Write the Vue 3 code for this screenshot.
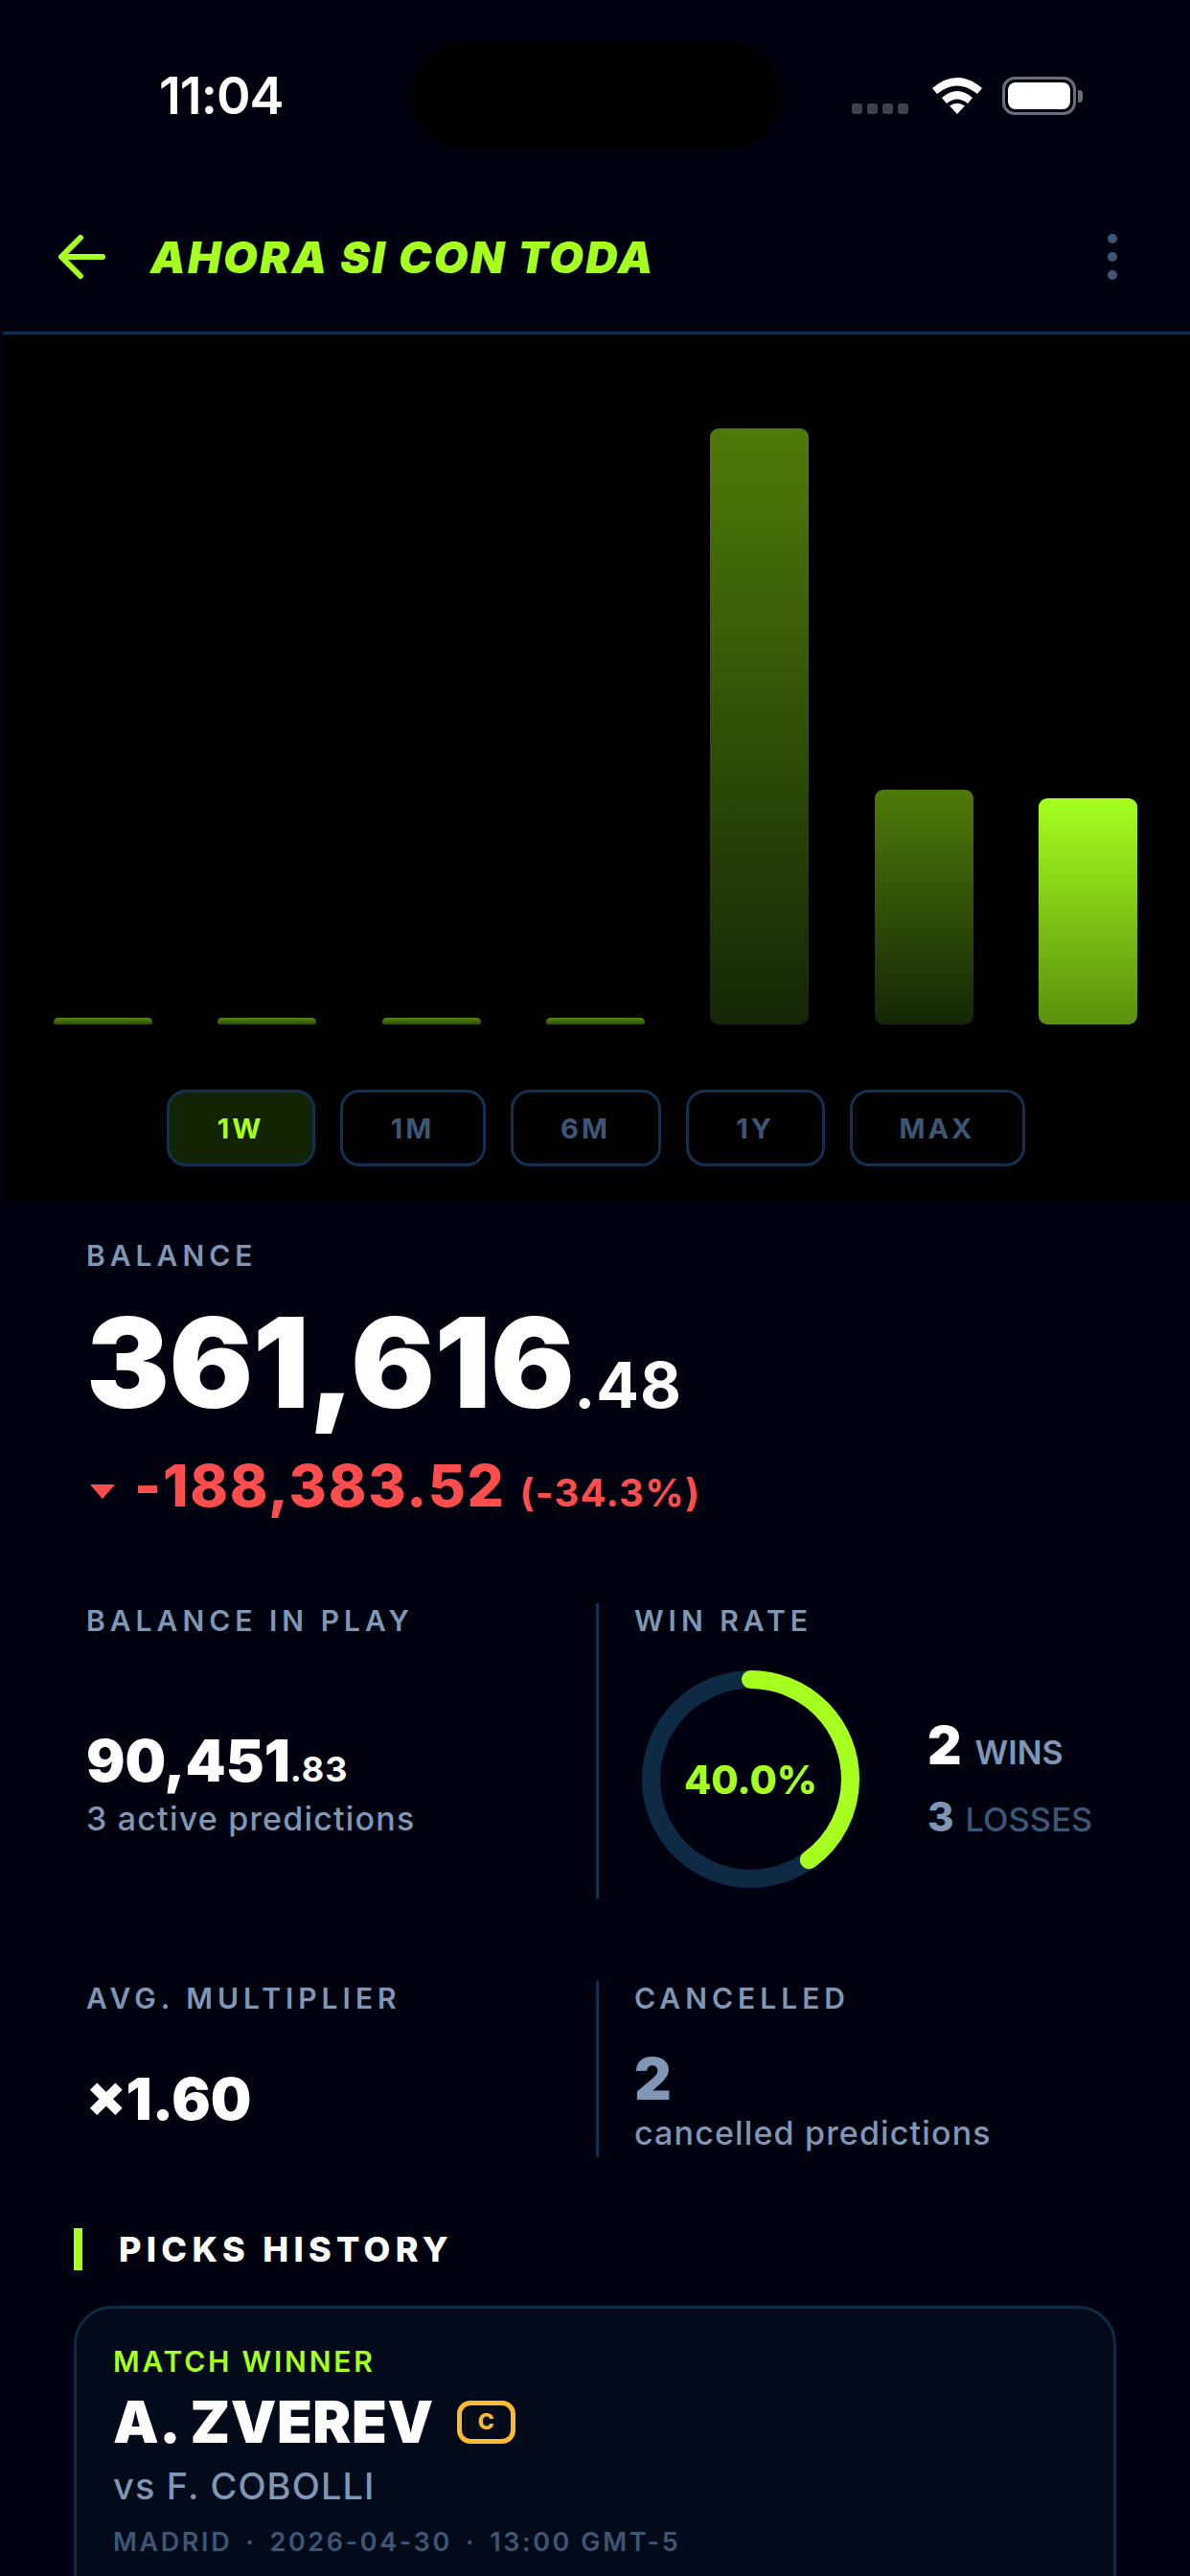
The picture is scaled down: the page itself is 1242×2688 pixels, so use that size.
<template>
  <div class="page">
    <div class="status-bar">
      <span class="time">11:04</span>
      <div class="island"></div>
      <div class="status-icons">
        <div class="cell">
          <i v-for="n in 4" :key="n"></i>
        </div>
        <svg class="wifi" width="52" height="38" viewBox="0 0 52 38" fill="#fff">
          <path d="M0 11Q26-11 52 11L47 17Q26 0 5 17Z" />
          <path d="M10 21Q26 7 42 21L37 27Q26 18 15 27Z" />
          <path d="M18 29.5Q26 24 34 29.5L26 38Z" />
        </svg>
        <div class="battery"><div class="battery-fill"></div></div>
        <div class="battery-nub"></div>
      </div>
    </div>

    <div class="top-bar">
      <svg class="back" width="50" height="46" viewBox="0 0 50 46" fill="none" stroke="#a6ff1f" stroke-width="6" stroke-linecap="round" stroke-linejoin="round">
        <path d="M46 23H4" />
        <path d="M23 3L3 23L23 43" />
      </svg>
      <div class="title">AHORA SI CON TODA</div>
      <div class="more"><i></i><i></i><i></i></div>
    </div>

    <div class="chart">
      <div class="bars">
        <div class="bar-slot" v-for="(bar, i) in bars" :key="i">
          <div class="bar" :class="bar.kind" :style="{ height: bar.height + 'px' }"></div>
        </div>
      </div>
      <div class="ranges">
        <div
          v-for="r in ranges"
          :key="r.label"
          class="range"
          :class="{ active: r.label === '1W' }"
          :style="{ width: r.width + 'px' }"
        >{{ r.label }}</div>
      </div>
    </div>

    <div class="balance">
      <div class="label">BALANCE</div>
      <div class="balance-value">361,616<span class="cents">.48</span></div>
      <div class="delta">
        <span class="tri"></span>
        <span class="delta-num">-188,383.52</span>
        <span class="delta-pct">(-34.3%)</span>
      </div>
    </div>

    <div class="stats first">
      <div class="stat left">
        <div class="label">BALANCE IN PLAY</div>
        <div class="play">
          <div class="num">90,451<span class="num-cents">.83</span></div>
          <div class="sub">3 active predictions</div>
        </div>
      </div>
      <div class="stat right">
        <div class="label">WIN RATE</div>
        <div class="win-row">
          <div class="ring">
            <svg width="227" height="227" viewBox="0 0 227 227" fill="none">
              <circle cx="113.5" cy="113.5" r="104" stroke="#0e2a45" stroke-width="19" />
              <circle
                cx="113.5"
                cy="113.5"
                r="104"
                stroke="#a6ff1f"
                stroke-width="19"
                stroke-linecap="round"
                :stroke-dasharray="dash"
                transform="rotate(-90 113.5 113.5)"
              />
            </svg>
            <span class="ring-text">40.0%</span>
          </div>
          <div class="tally">
            <div class="tally-win"><b>2</b><span>WINS</span></div>
            <div class="tally-loss"><b>3</b><span>LOSSES</span></div>
          </div>
        </div>
      </div>
    </div>

    <div class="stats second">
      <div class="stat left">
        <div class="label">AVG. MULTIPLIER</div>
        <div class="num multi">×1.60</div>
      </div>
      <div class="stat right">
        <div class="label">CANCELLED</div>
        <div class="num muted">2</div>
        <div class="sub">cancelled predictions</div>
      </div>
    </div>

    <div class="section-head">
      <span class="section-bar"></span>
      <span class="section-title">PICKS HISTORY</span>
    </div>

    <div class="card">
      <div class="market">MATCH WINNER</div>
      <div class="player">
        <span>A. ZVEREV</span>
        <span class="badge">C</span>
      </div>
      <div class="versus">vs F. COBOLLI</div>
      <div class="meta">MADRID<em>·</em>2026-04-30<em>·</em>13:00 GMT-5</div>
    </div>
  </div>
</template>

<script setup>
const bars = [
  { height: 7, kind: 'flat' },
  { height: 7, kind: 'flat' },
  { height: 7, kind: 'flat' },
  { height: 7, kind: 'flat' },
  { height: 622, kind: 'dim' },
  { height: 245, kind: 'dim' },
  { height: 236, kind: 'now' }
]

const ranges = [
  { label: '1W', width: 155 },
  { label: '1M', width: 152 },
  { label: '6M', width: 157 },
  { label: '1Y', width: 145 },
  { label: 'MAX', width: 183 }
]

// 40% of the ring
const circ = 2 * Math.PI * 104
const dash = `${circ * 0.4} ${circ}`
</script>

<style>
html,
body {
  margin: 0;
  background: #00030f;
}
</style>

<style scoped>
.page {
  width: 1242px;
  height: 2688px;
  overflow: hidden;
  background: #00030f;
  color: #fff;
  font-family: Inter, "Liberation Sans", sans-serif;
  box-sizing: border-box;
}

.status-bar {
  position: relative;
  height: 195px;
  box-sizing: border-box;
}

.time {
  position: absolute;
  left: 166px;
  top: 70px;
  font-size: 54px;
  line-height: 60px;
  font-weight: 600;
  letter-spacing: -1px;
}

.island {
  position: absolute;
  left: 428px;
  top: 43px;
  width: 387px;
  height: 113px;
  border-radius: 57px;
  background: #000;
}

.status-icons {
  position: absolute;
  left: 889px;
  top: 80px;
  display: flex;
  align-items: flex-end;
}

.cell {
  display: flex;
  gap: 5px;
  margin-bottom: 1px;
}

.cell i {
  width: 11px;
  height: 11px;
  border-radius: 3px;
  background: #3c4350;
}

.wifi {
  margin-left: 25px;
  margin-bottom: 1px;
}

.battery {
  width: 77px;
  height: 40px;
  margin-left: 21px;
  padding: 3px;
  border: 3px solid #6b6e76;
  border-radius: 13px;
  box-sizing: border-box;
}

.battery-fill {
  height: 100%;
  border-radius: 8px;
  background: #fff;
}

.battery-nub {
  width: 5px;
  height: 13px;
  margin-left: 2px;
  margin-bottom: 13px;
  border-radius: 0 4px 4px 0;
  background: #6b6e76;
}

.top-bar {
  display: flex;
  align-items: center;
  height: 151px;
  margin-left: 3px;
  padding: 0 76px 0 58px;
  border-bottom: 3px solid #10304f;
  box-sizing: content-box;
}

.back {
  flex: none;
  position: relative;
  top: -3px;
}

.title {
  position: relative;
  top: -3px;
  margin-left: 46px;
  font-size: 46px;
  font-weight: 900;
  font-style: italic;
  letter-spacing: 2.5px;
  color: #a6ff1f;
}

.more {
  position: relative;
  top: -3px;
  margin-left: auto;
  display: flex;
  flex-direction: column;
  gap: 9px;
}

.more i {
  width: 10px;
  height: 10px;
  border-radius: 50%;
  background: #3d5675;
}

.chart {
  height: 905px;
  margin-left: 3px;
  padding: 0 53px;
  background: #000;
  box-sizing: border-box;
}

.bars {
  display: grid;
  grid-template-columns: repeat(7, 103px);
  column-gap: 68.33px;
  align-items: end;
  height: 720px;
}

.bar {
  border-radius: 9px;
}

.bar.flat {
  background: linear-gradient(#568510, #2f4c08);
  border-radius: 5px 5px 3px 3px;
}

.bar.dim {
  background: linear-gradient(#4f7a0a, #142606);
}

.bar.now {
  background: linear-gradient(#a6ff1f, #5a8f0c);
}

.ranges {
  display: flex;
  justify-content: center;
  gap: 26px;
  margin-top: 68px;
  margin-left: -2px;
}

.range {
  display: flex;
  align-items: center;
  justify-content: center;
  height: 80px;
  border: 3px solid #12304f;
  border-radius: 20px;
  box-sizing: border-box;
  font-size: 29px;
  font-weight: 700;
  letter-spacing: 3px;
  color: #3d5675;
}

.range.active {
  background: #132404;
  color: #a6ff1f;
}

.label {
  font-size: 30px;
  line-height: 36px;
  font-weight: 600;
  letter-spacing: 5px;
  color: #7f97b5;
}

.balance {
  padding: 38px 90px 0;
}

.balance-value {
  margin-top: 19px;
  font-size: 130px;
  line-height: 150px;
  font-weight: 900;
  letter-spacing: -0.4px;
}

.cents {
  font-size: 66px;
  font-weight: 700;
  letter-spacing: 1px;
}

.delta {
  display: flex;
  align-items: baseline;
  margin-top: -6px;
  color: #ff4d4d;
}

.tri {
  width: 0;
  height: 0;
  margin: 0 20px 0 4px;
  border-left: 13px solid transparent;
  border-right: 13px solid transparent;
  border-top: 15px solid #ff4d4d;
  position: relative;
  top: -8px;
}

.delta-num {
  font-size: 60px;
  line-height: 72px;
  font-weight: 800;
  letter-spacing: 1.7px;
}

.delta-pct {
  margin-left: 15px;
  font-size: 40px;
  font-weight: 700;
  letter-spacing: 1.2px;
}

.stats {
  display: grid;
  grid-template-columns: 532px 1fr;
  padding-left: 90px;
}

.stat.right {
  padding-left: 37px;
  border-left: 3px solid #10304f;
}

.first {
  height: 308px;
  margin-top: 87px;
}

.second {
  height: 184px;
  margin-top: 86px;
}

.play {
  margin-top: 92px;
}

.play .sub {
  margin-top: -5px;
  letter-spacing: 1.2px;
}

.num {
  font-size: 60px;
  line-height: 72px;
  font-weight: 900;
}

.num-cents {
  font-size: 36px;
  font-weight: 700;
  letter-spacing: 1px;
}

.sub {
  font-size: 34px;
  line-height: 42px;
  font-weight: 500;
  letter-spacing: 1.15px;
  color: #7f97b5;
}

.win-row {
  display: flex;
  align-items: center;
  margin-top: 34px;
  margin-left: 8px;
}

.ring {
  position: relative;
  width: 227px;
  height: 227px;
}

.ring svg {
  display: block;
}

.ring-text {
  position: absolute;
  inset: 0;
  display: flex;
  align-items: center;
  justify-content: center;
  font-size: 41px;
  font-weight: 800;
  color: #a6ff1f;
}

.tally {
  margin-left: 71px;
}

.tally-win,
.tally-loss {
  display: flex;
  align-items: baseline;
}

.tally-win b {
  font-size: 55px;
  line-height: 66px;
  font-weight: 900;
}

.tally-win span {
  margin-left: 14px;
  font-size: 34px;
  font-weight: 600;
  color: #7f97b5;
}

.tally-loss {
  margin-top: 12px;
}

.tally-loss b {
  font-size: 42px;
  line-height: 60px;
  font-weight: 800;
  color: #7f97b5;
}

.tally-loss span {
  margin-left: 12px;
  font-size: 34.5px;
  font-weight: 500;
  color: #3d5675;
}

.multi {
  margin-top: 51px;
}

.muted {
  margin-top: 30px;
  color: #7f97b5;
}

.section-head {
  display: flex;
  align-items: center;
  margin: 74px 0 0 77px;
}

.section-bar {
  width: 9px;
  height: 44px;
  background: #a6ff1f;
}

.section-title {
  margin-left: 38px;
  font-size: 36px;
  font-weight: 800;
  letter-spacing: 5.3px;
}

.card {
  width: 1088px;
  height: 400px;
  margin: 37px 0 0 77px;
  padding: 37px 38px;
  border: 3px solid #0f2a45;
  border-radius: 40px;
  background: #030b1a;
  box-sizing: border-box;
}

.market {
  font-size: 30px;
  line-height: 36px;
  font-weight: 600;
  letter-spacing: 2.8px;
  color: #a6ff1f;
}

.player {
  display: flex;
  align-items: center;
  margin-top: 9px;
  font-size: 60px;
  line-height: 72px;
  font-weight: 900;
  letter-spacing: 0.6px;
}

.badge {
  display: flex;
  align-items: center;
  justify-content: center;
  width: 61px;
  height: 45px;
  margin-left: 24px;
  border: 5px solid #fcbb2f;
  border-radius: 14px;
  box-sizing: border-box;
  font-size: 23px;
  line-height: 1;
  font-weight: 800;
  letter-spacing: 0;
  color: #fcbb2f;
}

.versus {
  margin-top: 8px;
  font-size: 38px;
  line-height: 46px;
  font-weight: 500;
  letter-spacing: 1.1px;
  color: #7f97b5;
}

.meta {
  margin-top: 20px;
  font-size: 27px;
  line-height: 32px;
  font-weight: 600;
  letter-spacing: 2.6px;
  color: #3d5675;
}

.meta em {
  margin: 0 14px;
  font-style: normal;
}
</style>
